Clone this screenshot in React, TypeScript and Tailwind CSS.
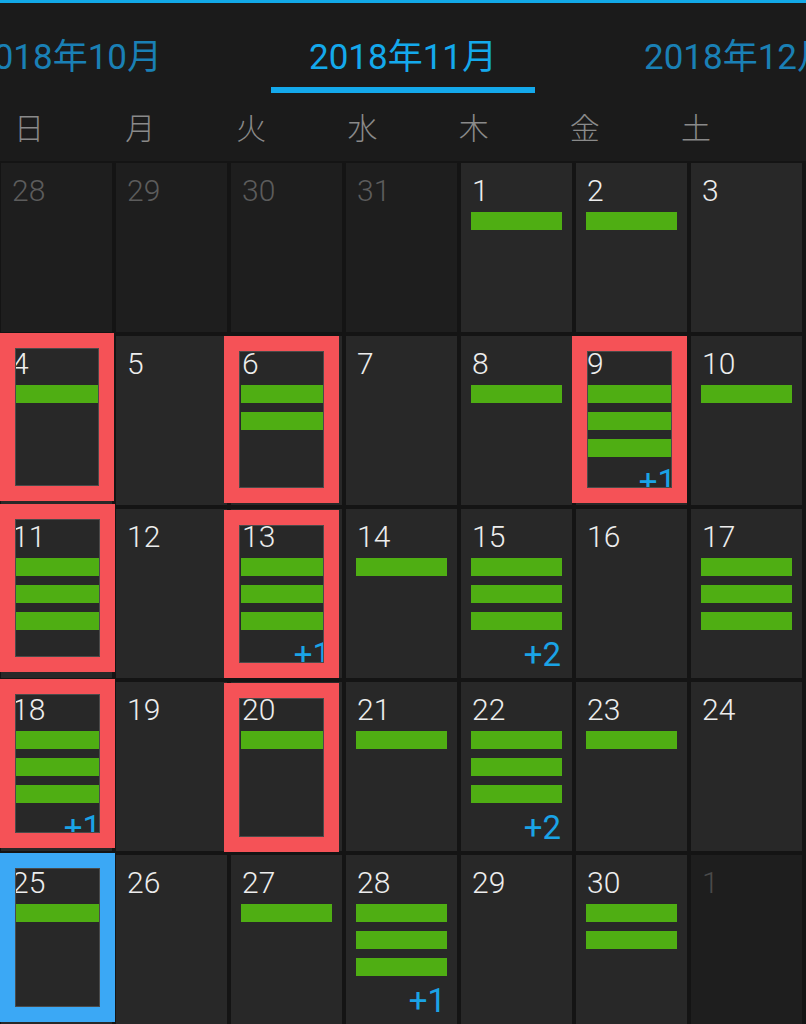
import React from "react";

type Day = {
	n: number;
	out?: "prev" | "next";
	bars?: number;
	more?: number;
	mark?: string;
};

const RED = "border-[#f55257]";
const BLUE = "border-[#3ba8f5]";

const weeks: Day[][] = [
	[
		{ n: 28, out: "prev" },
		{ n: 29, out: "prev" },
		{ n: 30, out: "prev" },
		{ n: 31, out: "prev" },
		{ n: 1, bars: 1 },
		{ n: 2, bars: 1 },
		{ n: 3 },
	],
	[
		{ n: 4, bars: 1, mark: `${RED} left-[-1px] top-[-3px] w-[114px] h-[168px]` },
		{ n: 5 },
		{ n: 6, bars: 2, mark: `${RED} left-[-7px] top-0 w-[115px] h-[167px]` },
		{ n: 7 },
		{ n: 8, bars: 1 },
		{ n: 9, bars: 3, more: 1, mark: `${RED} left-[-4px] top-0 w-[115px] h-[167px]` },
		{ n: 10, bars: 1 },
	],
	[
		{ n: 11, bars: 3, mark: `${RED} left-[-1px] top-[-5px] w-[115px] h-[168px]` },
		{ n: 12 },
		{ n: 13, bars: 3, more: 1, mark: `${RED} left-[-7px] top-[1px] w-[115px] h-[168px]` },
		{ n: 14, bars: 1 },
		{ n: 15, bars: 3, more: 2 },
		{ n: 16 },
		{ n: 17, bars: 3 },
	],
	[
		{ n: 18, bars: 3, more: 1, mark: `${RED} left-[-1px] top-[-3px] w-[115px] h-[169px]` },
		{ n: 19 },
		{ n: 20, bars: 1, mark: `${RED} left-[-7px] top-[1px] w-[115px] h-[169px]` },
		{ n: 21, bars: 1 },
		{ n: 22, bars: 3, more: 2 },
		{ n: 23, bars: 1 },
		{ n: 24 },
	],
	[
		{ n: 25, bars: 1, mark: `${BLUE} left-[-1px] top-[-2px] w-[115px] h-[169px]` },
		{ n: 26 },
		{ n: 27, bars: 1 },
		{ n: 28, bars: 3, more: 1 },
		{ n: 29 },
		{ n: 30, bars: 2 },
		{ n: 1, out: "next" },
	],
];

const weekDays = ["日", "月", "火", "水", "木", "金", "土"];

function MonthTabs() {
	const tabs = [
		{ label: "2018年10月", active: false },
		{ label: "2018年11月", active: true },
		{ label: "2018年12月", active: false },
	];

	// side tabs run off the screen edges, like the swipeable pager
	return (
		<div className="h-[90px] flex justify-center overflow-hidden">
			<div className="flex gap-[71px] shrink-0">
				{tabs.map((t) => (
					<div key={t.label} className="w-[264px] shrink-0 flex flex-col items-center">
						<span
							className={`pt-[37px] text-[35px] leading-[35px] whitespace-nowrap ${
								t.active ? "text-[#14a9ec]" : "text-[#1a80b5]"
							}`}>
							{t.label}
						</span>
						{t.active && <div className="mt-auto h-[6px] w-full bg-[#14a9ec]" />}
					</div>
				))}
			</div>
		</div>
	);
}

function DayCell({ day }: { day: Day }) {
	const bg = day.out ? "bg-[#1e1e1e]" : "bg-[#282828]";
	const numColor =
		day.out === "prev" ? "text-[#5c5c5c]" : day.out === "next" ? "text-[#4a4a4a]" : "text-[#ededed]";

	return (
		<div className={`relative h-[169px] flex flex-col ${bg}`}>
			<span className={`pl-[11px] pt-[13px] text-[30px] leading-[30px] font-light ${numColor}`}>
				{day.n}
			</span>
			{day.bars ? (
				<div className="mt-[6px] px-[10px] flex flex-col gap-[9px]">
					{Array.from({ length: day.bars }).map((_, i) => (
						<div key={i} className="h-[18px] bg-[#4fae13]" />
					))}
				</div>
			) : null}
			{day.more ? (
				<span className="mt-auto self-end pr-[11px] pb-[7px] text-[33px] leading-[33px] text-[#1aa3e6]">
					+{day.more}
				</span>
			) : null}
			{day.mark && (
				<div className={`absolute z-10 border-[15px] shadow-[inset_0_0_0_1px_#4a4a4a] ${day.mark}`} />
			)}
		</div>
	);
}

export default function App() {
	return (
		<div className="w-[806px] h-[1024px] overflow-hidden bg-[#1b1b1b] font-['Roboto','Noto_Sans_CJK_JP',sans-serif]">
			<div className="h-[3px] bg-[#12a9e8]" />
			<MonthTabs />

			<div className="h-[68px] grid grid-cols-[repeat(7,111.17px)] pl-[14px] pt-[21px]">
				{weekDays.map((d) => (
					<span key={d} className="text-[30px] leading-[30px] font-light text-[#8a8a8a]">
						{d}
					</span>
				))}
			</div>

			<div className="grid grid-cols-[repeat(7,111px)] gap-[4px] pl-[1px] pt-[2px] bg-[#141414]">
				{weeks.flat().map((day, i) => (
					<DayCell key={i} day={day} />
				))}
			</div>
		</div>
	);
}
